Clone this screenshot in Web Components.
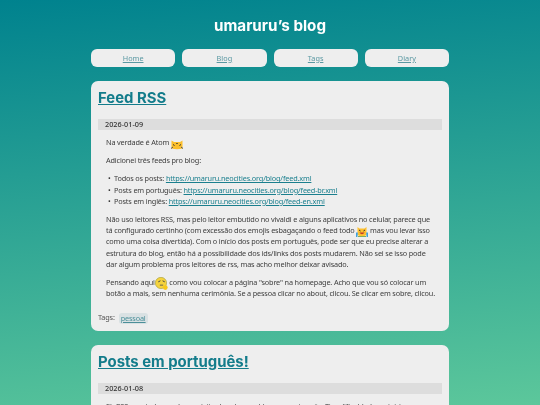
<!DOCTYPE html>
<html lang="pt">
<head>
<meta charset="utf-8">
<title>umaruru's blog</title>
<style>
  html { height: 405px; overflow: hidden; }
  body {
    margin: 0;
    height: 405px;
    overflow: hidden;
    background: linear-gradient(175deg, #00828e 0%, #5cc79b 100%);
    font-family: "Noto Sans", "Liberation Sans", sans-serif;
    color: #333;
  }
  blog-page { filter: blur(.25px); }
  blog-post p { margin: 7px 0; }
  blog-post ul { margin: 7px 0; padding-left: 8px; list-style: none; }
  blog-post li::before { content: "•"; display: inline-block; width: 6px; margin-left: -6px; }
  blog-post a { color: #1a7f8e; }
</style>
</head>
<body>
<blog-page>
  <blog-title slot="title">umaruru’s blog</blog-title>
  <blog-nav slot="nav">
    <nav-pill>Home</nav-pill>
    <nav-pill>Blog</nav-pill>
    <nav-pill>Tags</nav-pill>
    <nav-pill>Diary</nav-pill>
  </blog-nav>

  <blog-post heading="Feed RSS" date="2026-01-09" tag="pessoal">
    <p>Na verdade é Atom <blog-emoji name="cat"></blog-emoji></p>
    <p>Adicionei três feeds pro blog:</p>
    <ul>
      <li>Todos os posts: <a href="#">https://umaruru.neocities.org/blog/feed.xml</a></li>
      <li>Posts em português: <a href="#">https://umaruru.neocities.org/blog/feed-br.xml</a></li>
      <li>Posts em inglês: <a href="#">https://umaruru.neocities.org/blog/feed-en.xml</a></li>
    </ul>
    <p>Não uso leitores RSS, mas pelo leitor embutido no vivaldi e alguns aplicativos no celular, parece que tá configurado certinho (com excessão dos emojis esbagaçando o feed todo <blog-emoji name="laugh"></blog-emoji> mas vou levar isso como uma coisa divertida). Com o início dos posts em português, pode ser que eu precise alterar a estrutura do blog, então há a possibilidade dos ids/links dos posts mudarem. Não sei se isso pode dar algum problema pros leitores de rss, mas acho melhor deixar avisado.</p>
    <p>Pensando aqui <blog-emoji name="think" style="width:13px;height:13px;margin-left:-2px"></blog-emoji> como vou colocar a página "sobre" na homepage. Acho que vou só colocar um botão a mais, sem nenhuma cerimônia. Se a pessoa clicar no about, clicou. Se clicar em sobre, clicou.</p>
  </blog-post>

  <blog-post heading="Posts em português!" date="2026-01-08">
    <p>Eh RSS, eu ainda vou dar um jeito de colocar o blog em português. Tive dificuldade no início</p>
  </blog-post>
</blog-page>

<script>
class BlogPage extends HTMLElement {
  constructor() {
    super();
    const root = this.attachShadow({mode: 'open'});
    root.innerHTML = `<style>
    :host { display: block; }
    .wrap {
      display: flex;
      flex-direction: column;
      width: 358px;
      margin: 0 auto;
      padding-top: 17px;
      gap: 14px;
    }
    </style>
    <div class="wrap">
      <slot name="title"></slot>
      <slot name="nav"></slot>
      <slot></slot>
    </div>`;
  }
}

class BlogTitle extends HTMLElement {
  constructor() {
    super();
    const root = this.attachShadow({mode: 'open'});
    root.innerHTML = `<style>
    :host {
      display: block;
      text-align: center;
      color: #fff;
      font: 700 15.2px/18px "Inter", "Liberation Sans", sans-serif;
    }
    </style><slot></slot>`;
  }
}

class BlogNav extends HTMLElement {
  constructor() {
    super();
    const root = this.attachShadow({mode: 'open'});
    root.innerHTML = `<style>
    :host {
      display: grid;
      grid-template-columns: repeat(4, 1fr);
      gap: 7px;
    }
    </style><slot></slot>`;
  }
}

class NavPill extends HTMLElement {
  constructor() {
    super();
    const root = this.attachShadow({mode: 'open'});
    root.innerHTML = `<style>
    :host {
      display: block;
      height: 18px;
      border-radius: 6px;
      background: #eeeeee;
      text-align: center;
      font-size: 7.3px;
      line-height: 18px;
    }
    a { color: #5a98a2; }
    </style><a href="#"><slot></slot></a>`;
  }
}

class BlogPost extends HTMLElement {
  constructor() {
    super();
    const root = this.attachShadow({mode: 'open'});
    const tag = this.getAttribute('tag');
    root.innerHTML = `<style>
    :host {
      display: block;
      background: #eeeeee;
      border-radius: 7px;
      padding: 6px 7px 7px;
      font-size: 7.3px;
      letter-spacing: -.16px;
      line-height: 11.2px;
      color: #3d3d3d;
    }
    h2 {
      margin: 0 0 10px;
      letter-spacing: 0;
      font: 700 14.9px/22px "Inter", "Liberation Sans", sans-serif;
    }
    h2 a { color: #137c8b; }
    .date {
      background: #dddddd;
      padding: 0 7px;
      height: 11px;
      font-weight: 500;
      letter-spacing: 0;
      line-height: 11px;
      color: #333;
    }
    .body { padding: 0 7px 0 8px; margin-top: 7px; }
    .tags { display: flex; align-items: center; gap: 4px; margin-top: 13px; color: #555; }
    .tag { background: #d9e1e3; border-radius: 3px; padding: 0 2px; height: 11px; }
    .tag a { color: #4b8f99; }
    </style>
    <h2><a href="#">${this.getAttribute('heading')}</a></h2>
    <div class="date">${this.getAttribute('date')}</div>
    <div class="body"><slot></slot></div>
    ${tag ? `<div class="tags">Tags: <span class="tag"><a href="#">${tag}</a></span></div>` : ''}`;
  }
}

const EMOJI = {
  cat: `<path d="M.5 2.500l2.500 1.500h6l2.500-1.500v8q-5.500 1.500-11 0z" fill="#fbbf2d"/>
        <path d="M2 6.500l1.500 1M5.300 5.500l1.400 0M8.500 7.500l1.500-1" stroke="#333" stroke-width="1" fill="none"/>
        <path d="M0 10.500l2-1.500M10 9l2 1.500" stroke="#555" stroke-width="1"/>`,
  laugh: `<path d="M1.500 1l2 1.500h5l2-1.500v8q-4.500 2.500-9 0z" fill="#fdc02f"/>
          <path d="M3 4l1.500 1M9 4L7.500 5" stroke="#333" stroke-width="1" fill="none"/>
          <path d="M3.300 6.500h5.400q-2.700 3.500-5.400 0z" fill="#c0392b"/>
          <path d="M1 6.500L.5 11M11 6.500l.5 4.500" stroke="#3d9fdc" stroke-width="1.800"/>
          <path d="M2 10.500h8" stroke="#7fae5a" stroke-width="1"/>`,
  think: `<circle cx="5.500" cy="5.500" r="5.200" fill="#f5d33d" stroke="#a9a040" stroke-width=".6"/>
          <path d="M3 4.500l2-1M7 3.500l2 1" stroke="#444" stroke-width=".9" fill="none"/>
          <path d="M4.500 7.500h3" stroke="#555" stroke-width=".8"/>
          <circle cx="9.500" cy="9.800" r="2.200" fill="#f7c81c"/>`
};

class BlogEmoji extends HTMLElement {
  constructor() {
    super();
    const root = this.attachShadow({mode: 'open'});
    root.innerHTML = `<style>
    :host { display: inline-block; width: 12px; height: 12px; margin: -2px 0; vertical-align: -3px; }
    svg { display: block; width: 100%; height: 100%; }
    </style>
    <svg viewBox="0 0 12 12">${EMOJI[this.getAttribute('name')] || ''}</svg>`;
  }
}

customElements.define('blog-page', BlogPage);
customElements.define('blog-title', BlogTitle);
customElements.define('blog-nav', BlogNav);
customElements.define('nav-pill', NavPill);
customElements.define('blog-post', BlogPost);
customElements.define('blog-emoji', BlogEmoji);
</script>
</body>
</html>
